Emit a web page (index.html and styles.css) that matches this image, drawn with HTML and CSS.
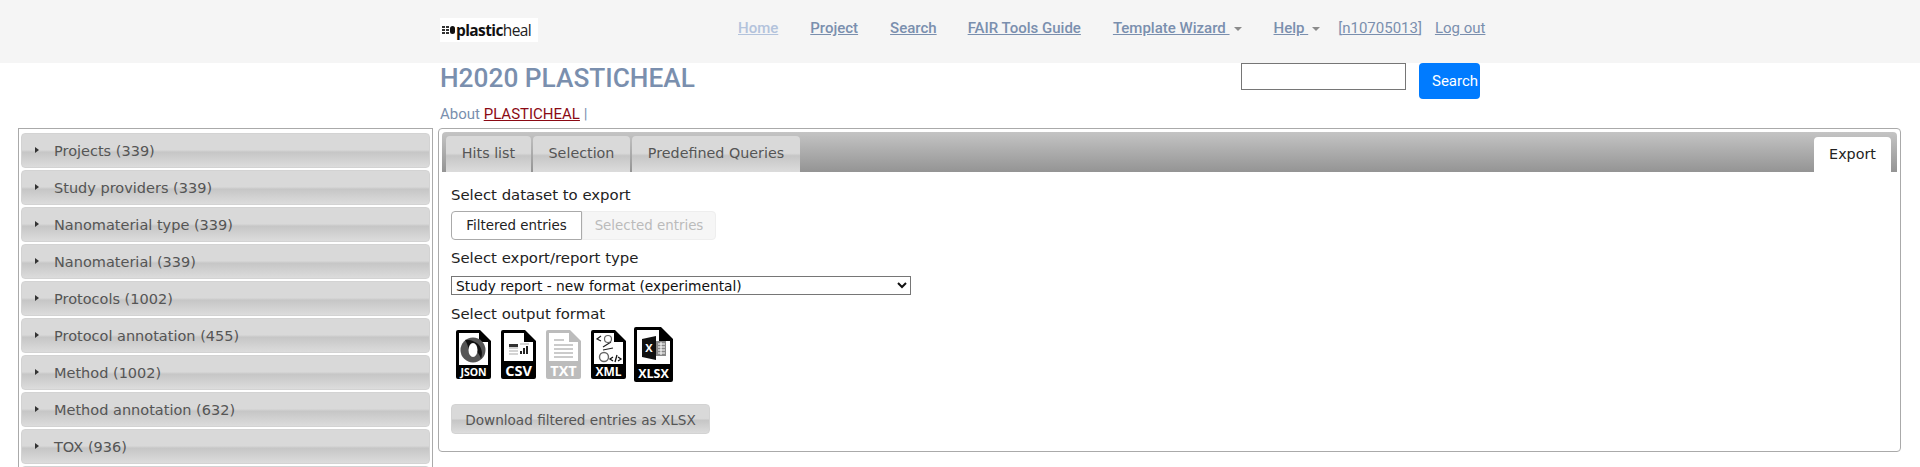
FILE: index.html
```html
<!DOCTYPE html>
<html lang="en">
<head>
  <meta charset="UTF-8" />
  <title>H2020 PLASTICHEAL</title>
  <link rel="stylesheet" href="styles.css">
</head>
<body>
  <nav class="navbar">
    <div class="logo"><span class="logo-dots"><i></i><i></i><i></i><i></i><i></i><i></i></span><span class="logo-person"></span><b>plastic</b>heal</div>
    <ul class="nav-links">
      <li class="home"><a href="#">Home</a></li>
      <li class="project"><a href="#">Project</a></li>
      <li class="search"><a href="#">Search</a></li>
      <li class="fair"><a href="#">FAIR Tools Guide</a></li>
      <li class="wizard"><a href="#">Template Wizard&nbsp;</a><span class="caret"></span></li>
      <li class="help"><a href="#">Help&nbsp;</a><span class="caret"></span></li>
    </ul>
    <div class="user">[<a href="#">n10705013</a>]</div>
    <a class="logout" href="#">Log out</a>
  </nav>

  <header class="page-head">
    <div class="head-left">
      <h1>H2020 PLASTICHEAL</h1>
      <p class="about">About <a href="#">PLASTICHEAL</a> |</p>
    </div>
    <form class="search-form">
      <input type="text" />
      <button type="button">Search</button>
    </form>
  </header>

  <div class="content">
    <aside class="facets">
      <div class="facet"><span class="arrow"></span>Projects (339)</div>
      <div class="facet"><span class="arrow"></span>Study providers (339)</div>
      <div class="facet"><span class="arrow"></span>Nanomaterial type (339)</div>
      <div class="facet"><span class="arrow"></span>Nanomaterial (339)</div>
      <div class="facet"><span class="arrow"></span>Protocols (1002)</div>
      <div class="facet"><span class="arrow"></span>Protocol annotation (455)</div>
      <div class="facet"><span class="arrow"></span>Method (1002)</div>
      <div class="facet"><span class="arrow"></span>Method annotation (632)</div>
      <div class="facet"><span class="arrow"></span>TOX (936)</div>
      <div class="facet"></div>
    </aside>

    <main class="panel">
      <div class="tabs">
        <a class="tab tab-hits">Hits list</a>
        <a class="tab tab-selection">Selection</a>
        <a class="tab tab-queries">Predefined Queries</a>
        <a class="tab tab-export active">Export</a>
      </div>
      <div class="tab-body">
        <div class="label">Select dataset to export</div>
        <div class="toggle">
          <span class="toggle-on">Filtered entries</span><span class="toggle-off">Selected entries</span>
        </div>
        <div class="label label-type">Select export/report type</div>
        <select class="type-select">
          <option>Study report - new format (experimental)</option>
        </select>
        <div class="label label-format">Select output format</div>
        <div class="formats">
          <!-- JSON -->
          <svg class="file" viewBox="0 0 35 49">
            <path d="M2 0H24L35 11V47a2 2 0 0 1-2 2H2a2 2 0 0 1-2-2V2a2 2 0 0 1 2-2Z" />
            <path class="sheet" d="M3 3H23V12H32V35H3Z" />
            <circle cx="17" cy="20" r="12.5" fill="#555" />
            <path d="M9 10C20 9 29 17 25 29 23 21 17 18 13 20 12 16 11 13 9 10Z" fill="#111" />
            <ellipse cx="17" cy="20" rx="4.5" ry="7" fill="#fff" />
            <text class="file-text" x="17.5" y="46" font-size="10.5">JSON</text>
          </svg>
          <!-- CSV -->
          <svg class="file" viewBox="0 0 35 49">
            <path d="M2 0H24L35 11V47a2 2 0 0 1-2 2H2a2 2 0 0 1-2-2V2a2 2 0 0 1 2-2Z" />
            <path class="sheet" d="M3 3H23V12H32V31H3Z" />
            <path d="M8 14H17V17H8Z" fill="#333" />
            <path d="M8 18H17M8 21H17M8 24H17M19 14H28" stroke="#aaa" stroke-width="1.2" />
            <path d="M20 24V21M23 24V18M26 24V16" stroke="#222" stroke-width="2" />
            <text class="file-text" x="17.5" y="46" font-size="14.5">CSV</text>
          </svg>
          <!-- TXT -->
          <svg class="file file-off" viewBox="0 0 35 49">
            <path d="M2 0H24L35 11V47a2 2 0 0 1-2 2H2a2 2 0 0 1-2-2V2a2 2 0 0 1 2-2Z" />
            <path class="sheet" d="M3 3H23V12H32V31H3Z" />
            <path d="M8 10H18M8 15H27M8 19H27M8 23H27M8 27H27" stroke="#bbb" stroke-width="1.3" />
            <text class="file-text" x="17.5" y="46" font-size="14.5">TXT</text>
          </svg>
          <!-- XML -->
          <svg class="file" viewBox="0 0 35 49">
            <path d="M2 0H24L35 11V47a2 2 0 0 1-2 2H2a2 2 0 0 1-2-2V2a2 2 0 0 1 2-2Z" />
            <path class="sheet" d="M3 3H23V12H32V34H3Z" />
            <path d="M10 6L6 9L10 11M12 17L20 12M22 18L12 20" fill="none" stroke="#222" stroke-width="1.2" />
            <circle cx="17" cy="9" r="3.5" fill="none" stroke="#666" stroke-width="1.2" />
            <circle cx="13" cy="27" r="4.5" fill="none" stroke="#666" stroke-width="1.4" />
            <path d="M22 27L19 29L22 31M26 25L24 32M27 27L30 29L27 31" fill="none" stroke="#111" stroke-width="1.3" />
            <text class="file-text" x="17.5" y="46" font-size="12">XML</text>
          </svg>
          <!-- XLSX -->
          <svg class="file file-xlsx" viewBox="0 0 39 55">
            <path d="M2 0H27L39 12V53a2 2 0 0 1-2 2H2a2 2 0 0 1-2-2V2a2 2 0 0 1 2-2Z" />
            <path class="sheet" d="M3 3H25V14H36V37H3Z" />
            <path d="M8 12L22 9V33L8 30Z" fill="#111" />
            <path d="M22 14H32V29H22Z" fill="#888" />
            <path d="M24 17H31M24 20H31M24 23H31M24 26H31M27 15V28" stroke="#fff" stroke-width="1" />
            <text class="file-mark" x="15" y="25" font-size="11">X</text>
            <text class="file-text" x="19.5" y="51" font-size="12.5">XLSX</text>
          </svg>
        </div>
        <button type="button" class="download">Download filtered entries as XLSX</button>
      </div>
    </main>
  </div>
</body>
</html>
```
FILE: styles.css
```css
html, body {
  margin: 0;
  height: 100vh;
  overflow: hidden;
}

body {
  background: #fff;
  font-family: Roboto, sans-serif;
  font-size: 15px;
  color: #7a8fae;
}

a {
  color: inherit;
}

/* top bar */
.navbar {
  height: 63px;
  background: #f5f5f5;
  display: flex;
  align-items: flex-start;
  padding-left: 440px;
  box-sizing: border-box;
  line-height: 18px;
}

.logo {
  width: 98px;
  height: 24px;
  margin-top: 18px;
  background: #fff;
  font-family: "Open Sans", sans-serif;
  font-size: 15.5px;
  line-height: 24px;
  color: #222;
  display: flex;
  align-items: center;
  letter-spacing: -0.6px;
  white-space: nowrap;
}

.logo b {
  color: #111;
  font-weight: 700;
}

.logo-dots {
  flex: none;
  width: 7px;
  margin-left: 2px;
  display: flex;
  flex-wrap: wrap;
  gap: 1px;
}

.logo-dots i {
  width: 3px;
  height: 2px;
  background: #333;
}

.logo-person {
  flex: none;
  width: 5px;
  height: 8px;
  margin: 0 1px;
  background: #111;
  border-radius: 3px;
}

.nav-links {
  list-style: none;
  display: flex;
  margin: 19px 0 0;
  padding: 0;
  font-weight: 500;
}

.nav-links .home { margin-left: 200px; color: #b3c3dc; }
.nav-links .project { margin-left: 32px; }
.nav-links .search { margin-left: 32px; }
.nav-links .fair { margin-left: 31px; }
.nav-links .wizard { margin-left: 32px; }
.nav-links .help { margin-left: 32px; }

.caret {
  display: inline-block;
  margin-left: 4px;
  vertical-align: 2px;
  border-top: 4px solid #8b8b8b;
  border-left: 4px solid transparent;
  border-right: 4px solid transparent;
}

.user {
  margin: 19px 0 0 18px;
}

.logout {
  margin: 19px 0 0 13px;
}

/* title row */
.page-head {
  display: flex;
  align-items: flex-start;
  justify-content: space-between;
  width: 1040px;
  height: 65px;
  margin-left: 440px;
}

.head-left h1 {
  margin: 0;
  font-size: 26.25px;
  font-weight: 500;
  line-height: 30px;
  color: #7a8fae;
}

.about {
  margin: 12px 0 0;
  line-height: 18px;
}

.about a {
  color: #8b0a14;
}

.search-form {
  display: flex;
  align-items: flex-start;
}

.search-form input {
  width: 165px;
  height: 27px;
  box-sizing: border-box;
  margin: 0 13px 0 0;
  border: 1px solid #767676;
  background: #fff;
}

.search-form button {
  width: 61px;
  height: 36px;
  padding: 0 0 0 13px;
  border: 0;
  border-radius: 4px;
  background: #007bff;
  color: #fff;
  font-family: Roboto, sans-serif;
  font-size: 15px;
  text-align: left;
}

/* facets + panel */
.content {
  display: flex;
  align-items: flex-start;
  gap: 5px;
  padding: 0 19px 0 18px;
}

.facets {
  width: 415px;
  box-sizing: border-box;
  flex: none;
  border: 1px solid #aaa;
  padding: 4px 2px 2px;
  display: flex;
  flex-direction: column;
  gap: 2px;
}

.facet {
  height: 35px;
  box-sizing: border-box;
  flex: none;
  padding: 1px 0 0 32px;
  border: 1px solid #d3d3d3;
  border-radius: 4px;
  background: linear-gradient(#d9d9d9 0, #d9d9d9 48%, #c6c6c6 55%, #dcdcdc 100%);
  font-family: "DejaVu Sans", sans-serif;
  font-size: 14.5px;
  line-height: 30px;
  color: #555;
  display: flex;
  align-items: center;
  position: relative;
}

.arrow {
  position: absolute;
  left: 13px;
  top: 13px;
  border-left: 4px solid #333;
  border-top: 3px solid transparent;
  border-bottom: 3px solid transparent;
}

.panel {
  flex: 1;
  height: 324px;
  box-sizing: border-box;
  border: 1px solid #aaa;
  border-radius: 4px;
  padding: 3px;
  font-family: "DejaVu Sans", sans-serif;
  font-size: 14.9px;
  color: #222;
}

.tabs {
  height: 40px;
  box-sizing: border-box;
  display: flex;
  padding: 4px 6px 0 4px;
  border-radius: 4px 4px 0 0;
  background: linear-gradient(#c4c4c4, #949494);
  gap: 2px;
}

.tab {
  height: 36px;
  box-sizing: border-box;
  border-radius: 4px 4px 0 0;
  background: linear-gradient(#d9d9d9 0, #d9d9d9 48%, #c6c6c6 55%, #dcdcdc 100%);
  color: #555;
  font-size: 14.3px;
  line-height: 35px;
  text-align: center;
}

.tab-hits { width: 85px; }
.tab-selection { width: 97px; }
.tab-queries { width: 168px; }

.tab-export {
  width: 77px;
  margin-left: auto;
  background: #fff;
  color: #222;
  height: 36px;
  margin-top: 1px;
}

.tab-body {
  padding: 0 0 0 9px;
}

.label {
  height: 18px;
  line-height: 18px;
  margin-top: 14px;
}

.toggle {
  display: flex;
  margin-top: 7px;
  height: 29px;
  font-size: 13.4px;
  line-height: 27px;
  text-align: center;
}

.toggle-on {
  width: 131px;
  box-sizing: border-box;
  border: 1px solid #aaa;
  border-radius: 4px 0 0 4px;
  color: #222;
}

.toggle-off {
  width: 134px;
  box-sizing: border-box;
  border: 1px solid #eee;
  border-radius: 0 4px 4px 0;
  background: #f6f6f6;
  color: #bbb;
}

.label-type {
  margin-top: 9px;
}

.type-select {
  display: block;
  width: 460px;
  height: 19px;
  margin-top: 9px;
  padding: 0;
  border: 1px solid #767676;
  border-radius: 0;
  background: #fff;
  font-family: "DejaVu Sans", sans-serif;
  font-size: 13.8px;
  color: #111;
}

.label-format {
  margin-top: 10px;
}

.formats {
  display: flex;
  align-items: center;
  height: 55px;
  margin-top: 4px;
  padding-left: 5px;
  gap: 10px;
}

.file {
  width: 35px;
  height: 49px;
  flex: none;
  fill: #000;
}

.file-off {
  fill: #bcbcbc;
}

.file-xlsx {
  width: 39px;
  height: 55px;
  margin-left: -2px;
}

.sheet {
  fill: #fff;
}

.file-text {
  fill: #fff;
  font-family: "Open Sans", sans-serif;
  font-weight: 700;
  text-anchor: middle;
}

.file-mark {
  fill: #fff;
  font-family: "Open Sans", sans-serif;
  font-weight: 700;
  text-anchor: middle;
}

.download {
  display: block;
  width: 259px;
  height: 30px;
  margin-top: 22px;
  padding: 1px 0 0;
  border: 1px solid #d3d3d3;
  border-radius: 4px;
  background: linear-gradient(#d9d9d9 0, #d9d9d9 48%, #c6c6c6 55%, #dcdcdc 100%);
  font-family: "DejaVu Sans", sans-serif;
  font-size: 13.6px;
  color: #555;
}
```
